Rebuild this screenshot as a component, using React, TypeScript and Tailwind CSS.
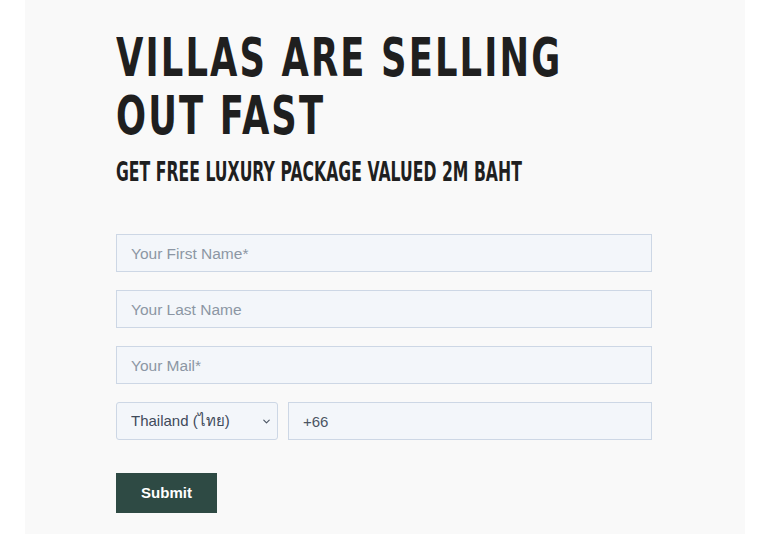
import { ChevronDown } from "lucide-react";

const fieldBox =
  "h-[38px] w-full border border-[#cdd7e5] bg-[#f3f6fa] px-[14px] text-[15px] text-[#4b5563] outline-none placeholder:text-[15.5px] placeholder:text-[#8c96a4]";

export default function App() {
  return (
    <div className="min-h-[538px] bg-white font-['Liberation_Sans',Arial,sans-serif]">
      <div className="ml-[25px] w-[720px] bg-[#f9f9f9] pb-[21px] pl-[91px] pr-[93px] pt-[29px]">
        <h1 className="origin-left scale-x-[0.667] whitespace-nowrap font-['DejaVu_Sans',sans-serif] text-[53px] font-bold leading-[58px] tracking-[0.06em] text-[#1f1f1f]">
          VILLAS ARE SELLING
          <br />
          OUT FAST
        </h1>
        <h2 className="mt-[12px] origin-left scale-x-[0.603] whitespace-nowrap font-['DejaVu_Sans',sans-serif] text-[26px] font-bold leading-[30px] text-[#1f1f1f]">
          GET FREE LUXURY PACKAGE VALUED 2M BAHT
        </h2>

        <form className="mt-[47px] flex flex-col gap-[18px]" onSubmit={(e) => e.preventDefault()}>
          <input className={fieldBox} placeholder="Your First Name*" />
          <input className={fieldBox} placeholder="Your Last Name" />
          <input className={fieldBox} placeholder="Your Mail*" />
          <div className="flex gap-[10px]">
            <div className="relative w-[162px] shrink-0">
              <select className="h-[38px] w-full appearance-none rounded-[3px] border border-[#cdd7e5] bg-[#f3f6fa] pl-[14px] text-[15px] text-[#3f4a5a] outline-none">
                <option>Thailand (ไทย)</option>
              </select>
              <ChevronDown className="pointer-events-none absolute right-[6px] top-[14px] size-[11px] text-[#4b5563]" strokeWidth={2.5} />
            </div>
            <input className={fieldBox} defaultValue="+66" />
          </div>
          <div className="pt-[15px]">
            <button
              type="submit"
              className="h-[40px] w-[101px] bg-[#2e4a44] text-[15px] font-bold text-white"
            >
              Submit
            </button>
          </div>
        </form>
      </div>
    </div>
  );
}
